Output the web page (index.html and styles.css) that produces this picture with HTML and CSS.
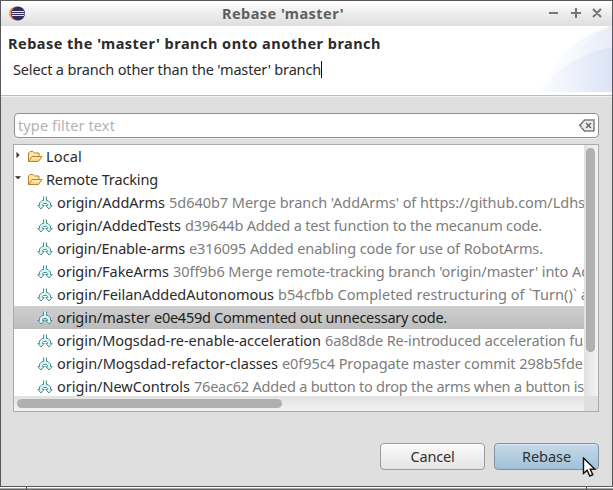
FILE: index.html
```html
<!DOCTYPE html>
<html lang="en">
<head>
<meta charset="utf-8">
<title>Rebase 'master'</title>
<link rel="stylesheet" href="styles.css">
</head>
<body>
<svg width="0" height="0" class="defs">
  <defs>
    <linearGradient id="fold" x1="0" y1="0" x2="0" y2="1"><stop offset="0" stop-color="#fff3c8"/><stop offset="1" stop-color="#f3c873"/></linearGradient>
    <symbol id="folder" viewBox="0 0 16 16">
      <path d="M1.500 12.500V4L3 2.500h3L7.500 4H12v3" fill="#fbe5ad" stroke="#bd8128"/>
      <path d="M1.500 12.500L5 7.500h10L11.500 12.500z" fill="url(#fold)" stroke="#bd8128" stroke-linejoin="round"/>
    </symbol>
    <symbol id="branch" viewBox="0 0 16 16">
      <path d="M6.500 1.500V5.500H5L2.500 8V10.500H.8L4 14l3.200-3.500H5.500V9.500L6.500 8.500H9.500L10.500 9.500V10.500H8.800L12 14l3.200-3.500H13.500V8L11 5.500H9.500V1.500" fill="#d5f5f5" stroke="#568f93"/>
    </symbol>
  </defs>
</svg>
<div class="window">
  <header class="titlebar">
    <svg class="logo" width="18" height="16" viewBox="0 0 18 16"><circle cx="8" cy="7.500" r="7" fill="#f2a04c"/><circle cx="10" cy="7.500" r="7" fill="#342b60"/><path d="M4 5.500h12M3.500 7.500h13M4 9.500h12" stroke="#e5e2f2" stroke-width="1.200"/></svg>
    <h1><span data-width="122">Rebase 'master'</span></h1>
    <svg class="controls" width="56" height="14" viewBox="0 0 56 14"><path d="M0 6h9M22 6h10M27 1v10M44 2l8 8M52 2l-8 8" stroke="#777" stroke-width="2" fill="none"/></svg>
  </header>
  <section class="banner">
    <div class="message">
      <h2><span data-width="373">Rebase the 'master' branch onto another branch</span></h2>
      <p><span data-width="308">Select a branch other than the 'master' branch</span><i class="caret"></i></p>
    </div>
    <svg class="swoosh" width="75" height="66" viewBox="0 0 75 66">
      <defs><linearGradient id="sw"><stop offset="0" stop-color="#fcfdff"/><stop offset="1" stop-color="#dae2f6"/></linearGradient></defs>
      <path d="M2 66C20 30 45 6 75 0v66z" fill="url(#sw)" opacity=".4"/>
      <path d="M22 66C31 36 50 8 75 0v66z" fill="url(#sw)" opacity=".4"/>
      <path d="M2 66C21 43 43 27 75 21v45z" fill="url(#sw)" opacity=".9"/>
    </svg>
  </section>
  <main>
    <div class="filter"><span data-width="97">type filter text</span>
      <svg width="16" height="13" viewBox="0 0 16 13"><path d="M.8 6.500L5.500 1H15v11H5.500z" fill="#eee" stroke="#555" stroke-width="1.500" stroke-dasharray="1.500 .5"/><path d="M7 4l5 5M12 4L7 9" stroke="#666" stroke-width="1.500"/></svg>
    </div>
    <div class="tree">
      <div class="rows">
        <div class="row group"><svg class="arrow" viewBox="0 0 6 8"><path d="M1.800 1.500L4.300 4 1.800 6.500z"/></svg><svg class="icon"><use href="#folder"/></svg><span data-width="36">Local</span></div>
        <div class="row group"><svg class="arrow" viewBox="0 0 6 8"><path d="M.5 2.500h5L3 5z"/></svg><svg class="icon"><use href="#folder"/></svg><span data-width="112">Remote Tracking</span></div>
        <div class="row"><svg class="icon"><use href="#branch"/></svg><span data-width="108">origin/AddArms</span><em data-width="416">5d640b7 Merge branch 'AddArms' of https://github.com/Ldhs</em></div>
        <div class="row"><svg class="icon"><use href="#branch"/></svg><span data-width="124">origin/AddedTests</span><em data-width="357">d39644b Added a test function to the mecanum code.</em></div>
        <div class="row"><svg class="icon"><use href="#branch"/></svg><span data-width="128">origin/Enable-arms</span><em data-width="354">e316095 Added enabling code for use of RobotArms.</em></div>
        <div class="row"><svg class="icon"><use href="#branch"/></svg><span data-width="112">origin/FakeArms</span><em data-width="417">30ff9b6 Merge remote-tracking branch 'origin/master' into Ad</em></div>
        <div class="row"><svg class="icon"><use href="#branch"/></svg><span data-width="217">origin/FeilanAddedAutonomous</span><em data-width="311">b54cfbb Completed restructuring of `Turn()` a</em></div>
        <div class="row selected"><svg class="icon"><use href="#branch"/></svg><span data-width="93">origin/master</span><em data-width="293">e0e459d Commented out unnecessary code.</em></div>
        <div class="row"><svg class="icon"><use href="#branch"/></svg><span data-width="264">origin/Mogsdad-re-enable-acceleration</span><em data-width="258">6a8d8de Re-introduced acceleration fu</em></div>
        <div class="row"><svg class="icon"><use href="#branch"/></svg><span data-width="221">origin/Mogsdad-refactor-classes</span><em data-width="301">e0f95c4 Propagate master commit 298b5fde</em></div>
        <div class="row"><svg class="icon"><use href="#branch"/></svg><span data-width="133">origin/NewControls</span><em data-width="390">76eac62 Added a button to drop the arms when a button is</em></div>
      </div>
      <div class="vscroll"><div class="thumb"></div></div>
      <div class="hscroll"><div class="thumb"></div></div>
      <div class="corner"></div>
    </div>
    <div class="actions">
      <button><span data-width="44">Cancel</span></button>
      <button class="primary"><span data-width="49">Rebase</span></button>
    </div>
  </main>
  <svg class="pointer" width="16" height="22" viewBox="0 0 16 22"><path d="M1.500 1v15.500l3.600-3.300 2.700 5.800 3-1.400-2.600-5.500h4.500z" fill="#fff" stroke="#111" stroke-width="1.400"/></svg>
</div>
<footer class="edge"><i></i><i></i></footer>
<script src="fit.js"></script>
</body>
</html>
```
FILE: fit.js
```js
document.querySelectorAll('[data-width]').forEach(function (el) {
  var natural = el.getBoundingClientRect().width;
  var extra = Number(el.dataset.width) - natural;
  el.style.letterSpacing = (extra / el.textContent.length) + 'px';
});
```
FILE: styles.css
```css
* { box-sizing: border-box; }
body { margin: 0; width: 613px; height: 490px; overflow: hidden; background: #dfdfdf; font: 14.5px/23px "Noto Sans", "Open Sans", sans-serif; color: #2b2b2b; }
svg { display: block; flex: none; }
span, em { white-space: pre; font-style: normal; flex: none; }
.defs { position: absolute; }
.window { width: 613px; height: 487px; border: 1px solid #59575a; background: #dfdfdf; }
.titlebar { height: 25px; display: flex; align-items: center; padding: 0 7px; background: linear-gradient(#fff, #f2f2f2 35%, #dedede); }
h1 { flex: 1; margin: 0; padding-left: 196px; font-size: 14.5px; line-height: 22px; padding-bottom: 2px; color: #5f5f5f; }
.banner { height: 69px; background: #fff; display: flex; justify-content: space-between; }
.message { padding: 6px 0 0 7px; }
h2 { margin: 0; font-size: 14.5px; line-height: 22px; }
p { margin: 4px 0 0 5px; line-height: 23px; display: flex; align-items: center; }
.caret { width: 1px; height: 17px; background: #111; }
main { height: 391px; padding: 17px 13px 0 12px; border-top: 1px solid #bdbdbd; box-shadow: inset 0 1px #f2f2f2; }
.filter { height: 25px; border: 1px solid #8f8f8f; border-radius: 4px; margin-left: 1px; padding: 0 3px; display: flex; align-items: center; justify-content: space-between; background: #fff; color: #b2b2b2; box-shadow: 0 1px #eee; }
.tree { height: 268px; margin-top: 6px; border: 1px solid #aaa; background: #fff; display: grid; grid-template-columns: 1fr 14px; grid-template-rows: 1fr 15px; }
.rows { overflow: hidden; min-width: 0; min-height: 0; }
.row { height: 23px; display: flex; align-items: center; padding-left: 23px; }
.row .icon { width: 16px; height: 16px; margin-right: 4px; }
.row em { margin-left: 4px; color: #7d7d7d; }
.group { padding-left: 1px; }
.group .icon { margin-right: 3px; }
.arrow { width: 6px; height: 8px; margin-right: 6px; fill: #333; stroke: #333; stroke-width: .6; margin-top: -3px; }
.selected { background: linear-gradient(#cfcfcf, #bdbdbd); color: #1c1c1c; }
.selected em { color: inherit; }
.vscroll { padding: 3px 2px; background: linear-gradient(90deg, #e1e1e1, #f3f3f3); }
.vscroll .thumb { width: 9px; height: 204px; border-radius: 5px; background: #b0b0b0; }
.hscroll { padding: 3px; background: linear-gradient(#e1e1e1, #f3f3f3); }
.hscroll .thumb { width: 265px; height: 9px; border-radius: 5px; background: #b0b0b0; }
.corner { background: #dfdfdf; }
.actions { display: flex; justify-content: flex-end; gap: 9px; margin-top: 31px; }
button { width: 105px; height: 27px; padding: 0; border: 1px solid #9c9c9c; border-radius: 4px; font: inherit; color: #303030; background: linear-gradient(#fafafa, #e4e4e4); box-shadow: inset 0 1px #fff; }
.primary { border-color: #7c92a5; background: linear-gradient(#c6dae9, #a2c0d8); box-shadow: inset 0 1px #dce9f4; }
.pointer { position: absolute; left: 582px; top: 457px; }
.edge { height: 3px; padding: 0 26px; display: flex; justify-content: space-between; background: linear-gradient(#fff 1px, #aaa 1px, #aaa 2px, #666 2px); }
.edge i { width: 1px; height: 3px; background: #555; }
```
